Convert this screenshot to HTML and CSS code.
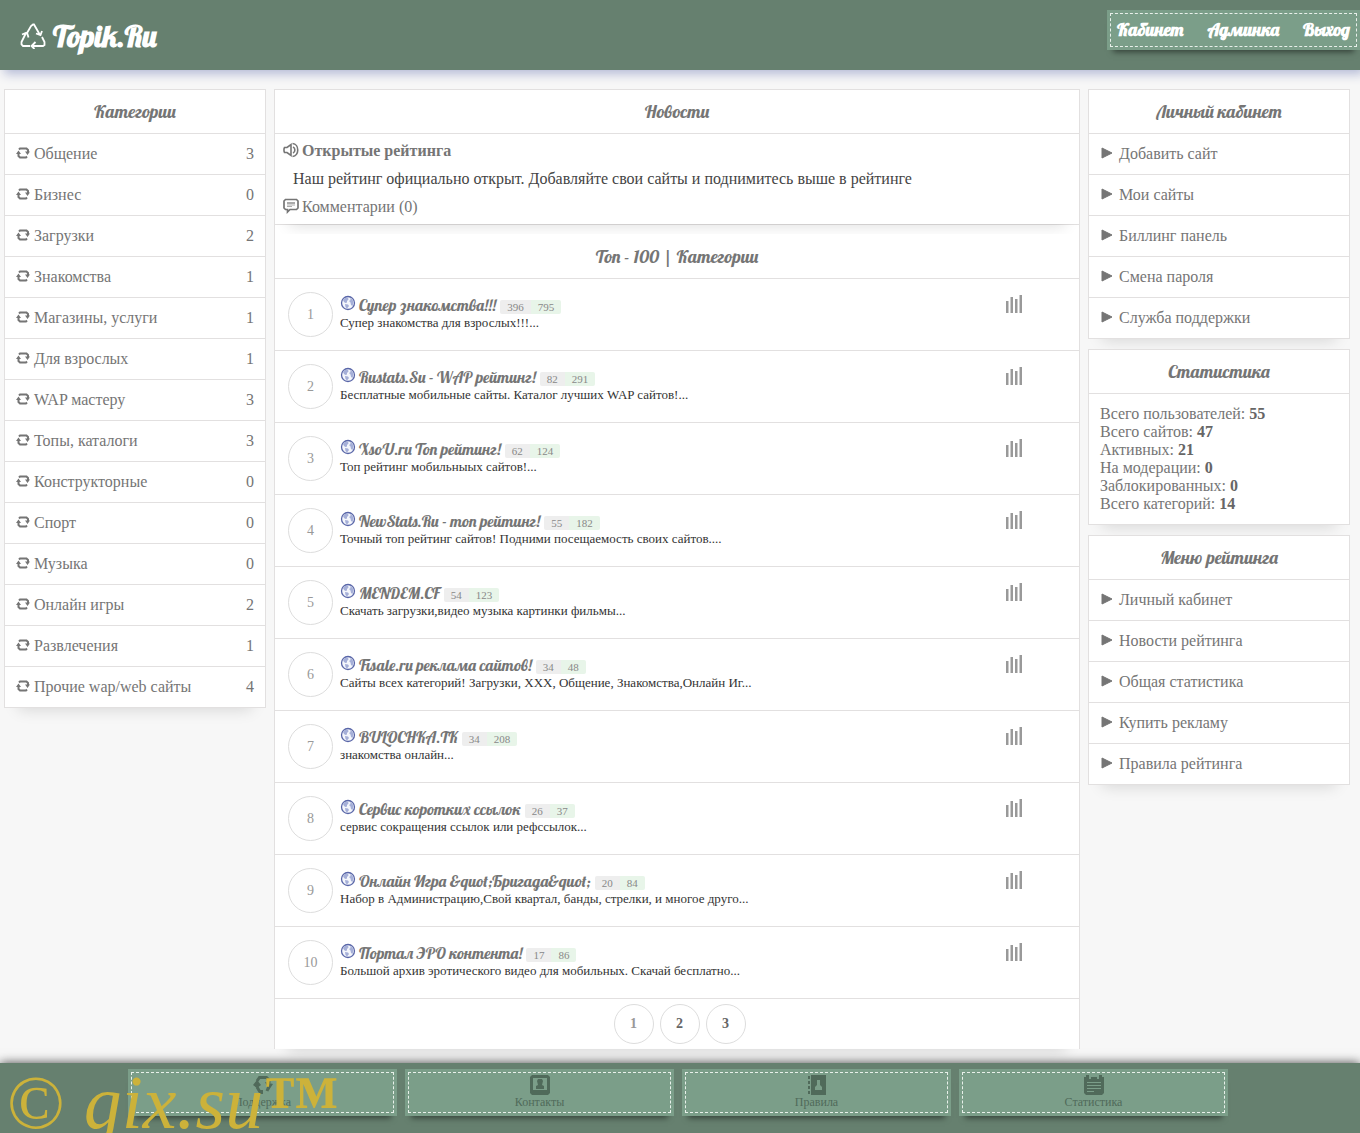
FILE: index.html
```html
<!DOCTYPE html>
<html lang="ru">
<head>
<meta charset="utf-8">
<meta name="viewport" content="width=device-width, initial-scale=1">
<title>Topik.Ru</title>
<link rel="stylesheet" href="styles.css">
</head>
<body>
<svg class="sprite" aria-hidden="true">
  <symbol id="i-cycle" viewBox="0 0 14 12"><path d="M3 2.500 4 1.500h6.500L12 3v2M11 9.500l-1 1H4L2.500 9V7" fill="none" stroke="currentColor" stroke-width="2"/><path d="M9 4.500h5L11.500 8zM0 7l2.500-3.500L5 7z" fill="currentColor"/></symbol>
  <symbol id="i-play" viewBox="0 0 12 12"><path d="M1 1v10l10-5z" fill="currentColor" stroke="currentColor" stroke-linejoin="round"/></symbol>
  <symbol id="i-globe" viewBox="0 0 16 16"><circle cx="8" cy="8" r="6.500" fill="#f4f6fb" stroke="#5966a8" stroke-width="1.300"/><path d="M3 5 5 3l3-.5.500 2L7 6v1.500L5.500 8 4 7zM10 3l2.500 1.500 1 3-1 3.500-1.500-1-.5-2.500L9 6l1.500-1zM5 9l3 .5 1 1.500-2 2.500-1.500-1.500z" fill="#a5afd8"/></symbol>
  <symbol id="i-bars" viewBox="0 0 16 18"><path d="M0 6h2.500v12H0zM4.500 2H7v16H4.500zM9 4h2.500v14H9zM13.500 0H16v18h-2.500z" fill="#999"/></symbol>
  <symbol id="i-sound" viewBox="0 0 16 16"><path d="M1.500 5.500h2.500L8 2.500v11L4 10.500H1.500L1 9V7zM9.500 1.500C16.500 2 16.500 14 9.500 14.500M10 5c2.500 1 2.500 5 0 6" fill="none" stroke="currentColor" stroke-width="1.600"/></symbol>
  <symbol id="i-comment" viewBox="0 0 16 16"><path d="M2.500 1.500h11l1.500 1.500v7l-1.500 1.500H7L4.500 14v-2.500h-2L1 10V3z" fill="none" stroke="currentColor" stroke-width="1.700"/><path d="M4 4h8v2H4zM4 6.500h8v1H4zM4 8h5v1H4z" fill="#aaa"/></symbol>
  <symbol id="f-cycle" viewBox="0 0 20 20"><path d="M4 6 6.500 2.500h7L16 5v3M4 12l3 5M4 8v4M16 11l-2 5" fill="none" stroke="currentColor" stroke-width="3"/><path d="M0 10l4-5 4 5-4 3zM12 7l8 2-4 6zM6 15h4v4H6z" fill="currentColor"/></symbol>
  <symbol id="f-card" viewBox="0 0 20 20"><path d="M2 0h16l2 2v16l-2 2H2l-2-2V2zM3 3v12h14V3z" fill-rule="evenodd" fill="currentColor"/><path d="M8 4h4l1 2-1 4 2 1v3H6v-3l2-1-1-4z" fill="currentColor"/></symbol>
  <symbol id="f-book" viewBox="0 0 20 20"><path d="M4 0h15v20H4zM10 5v5l-2 2v3h7v-3l-2-2V5z" fill-rule="evenodd" fill="currentColor"/><path d="M1 1h2v3H1zM1 6h2v3H1zM1 11h2v3H1zM1 16h2v3H1z" fill="currentColor"/></symbol>
  <symbol id="f-note" viewBox="0 0 20 20"><path d="M0 2h2V0h3v4h2V2h6v2h2V0h3v2h2v16l-2 2H2l-2-2zM3 7v1h14V7zM3 10v1h14v-1zM3 13v1h14v-1zM3 16v1h7v-1z" fill-rule="evenodd" fill="currentColor"/></symbol>
</svg>

<header class="top">
  <a class="logo" href="#">
    <svg width="26" height="26" viewBox="0 0 26 26" fill="none" stroke="currentColor" stroke-width="1.800" aria-hidden="true"><path d="M7 10l4-7 2-1.500h1L20 12M16 10.500l4.500 1.500L22 8M22 14l2.500 5v3L23 23H13M15.500 19l-4 4 3 3M10 23H3l-1.500-1.500V19L6 10M2 11.500l5-2 1.500 5"/></svg>
    Topik.Ru</a>
  <nav class="stitched usernav"><a href="#">Кабинет</a><a href="#">Админка</a><a href="#">Выход</a></nav>
</header>

<div class="columns">
  <aside>
    <section class="card">
      <h2>Категории</h2>
      <ul class="menu">
        <li><a href="#"><svg class="ic"><use href="#i-cycle"/></svg>Общение<span>3</span></a></li>
        <li><a href="#"><svg class="ic"><use href="#i-cycle"/></svg>Бизнес<span>0</span></a></li>
        <li><a href="#"><svg class="ic"><use href="#i-cycle"/></svg>Загрузки<span>2</span></a></li>
        <li><a href="#"><svg class="ic"><use href="#i-cycle"/></svg>Знакомства<span>1</span></a></li>
        <li><a href="#"><svg class="ic"><use href="#i-cycle"/></svg>Магазины, услуги<span>1</span></a></li>
        <li><a href="#"><svg class="ic"><use href="#i-cycle"/></svg>Для взрослых<span>1</span></a></li>
        <li><a href="#"><svg class="ic"><use href="#i-cycle"/></svg>WAP мастеру<span>3</span></a></li>
        <li><a href="#"><svg class="ic"><use href="#i-cycle"/></svg>Топы, каталоги<span>3</span></a></li>
        <li><a href="#"><svg class="ic"><use href="#i-cycle"/></svg>Конструкторные<span>0</span></a></li>
        <li><a href="#"><svg class="ic"><use href="#i-cycle"/></svg>Спорт<span>0</span></a></li>
        <li><a href="#"><svg class="ic"><use href="#i-cycle"/></svg>Музыка<span>0</span></a></li>
        <li><a href="#"><svg class="ic"><use href="#i-cycle"/></svg>Онлайн игры<span>2</span></a></li>
        <li><a href="#"><svg class="ic"><use href="#i-cycle"/></svg>Развлечения<span>1</span></a></li>
        <li><a href="#"><svg class="ic"><use href="#i-cycle"/></svg>Прочие wap/web сайты<span>4</span></a></li>
      </ul>
    </section>
  </aside>

  <main>
    <section class="card news">
      <h2>Новости</h2>
      <div class="newsbody">
        <a href="#"><svg class="ic16"><use href="#i-sound"/></svg><b>Открытые рейтинга</b></a>
        <p>Наш рейтинг официально открыт. Добавляйте свои сайты и поднимитесь выше в рейтинге</p>
        <a href="#"><svg class="ic16"><use href="#i-comment"/></svg>Комментарии (0)</a>
      </div>
    </section>
    <section class="card top100">
      <h2>Топ - 100 | Категории</h2>
      <ol class="sites">
        <li><span class="rank">1</span><div class="site"><div class="line"><svg class="ic16"><use href="#i-globe"/></svg><a href="#">Супер знакомства!!!</a><span class="hits">396</span><span class="hosts">795</span></div><p>Супер знакомства для взрослых!!!...</p></div><a class="stat" href="#" aria-label="Статистика"><svg><use href="#i-bars"/></svg></a></li>
        <li><span class="rank">2</span><div class="site"><div class="line"><svg class="ic16"><use href="#i-globe"/></svg><a href="#">Rustats.Su - WAP рейтинг!</a><span class="hits">82</span><span class="hosts">291</span></div><p>Бесплатные мобильные сайты. Каталог лучших WAP сайтов!...</p></div><a class="stat" href="#" aria-label="Статистика"><svg><use href="#i-bars"/></svg></a></li>
        <li><span class="rank">3</span><div class="site"><div class="line"><svg class="ic16"><use href="#i-globe"/></svg><a href="#">XsoU.ru Топ рейтинг!</a><span class="hits">62</span><span class="hosts">124</span></div><p>Топ рейтинг мобильныых сайтов!...</p></div><a class="stat" href="#" aria-label="Статистика"><svg><use href="#i-bars"/></svg></a></li>
        <li><span class="rank">4</span><div class="site"><div class="line"><svg class="ic16"><use href="#i-globe"/></svg><a href="#">NewStats.Ru - топ рейтинг!</a><span class="hits">55</span><span class="hosts">182</span></div><p>Точный топ рейтинг сайтов! Подними посещаемость своих сайтов....</p></div><a class="stat" href="#" aria-label="Статистика"><svg><use href="#i-bars"/></svg></a></li>
        <li><span class="rank">5</span><div class="site"><div class="line"><svg class="ic16"><use href="#i-globe"/></svg><a href="#">MENDEM.CF</a><span class="hits">54</span><span class="hosts">123</span></div><p>Скачать загрузки,видео музыка картинки фильмы...</p></div><a class="stat" href="#" aria-label="Статистика"><svg><use href="#i-bars"/></svg></a></li>
        <li><span class="rank">6</span><div class="site"><div class="line"><svg class="ic16"><use href="#i-globe"/></svg><a href="#">Fisale.ru реклама сайтов!</a><span class="hits">34</span><span class="hosts">48</span></div><p>Сайты всех категорий! Загрузки, XXX, Общение, Знакомства,Онлайн Иг...</p></div><a class="stat" href="#" aria-label="Статистика"><svg><use href="#i-bars"/></svg></a></li>
        <li><span class="rank">7</span><div class="site"><div class="line"><svg class="ic16"><use href="#i-globe"/></svg><a href="#">BULOCHKA.TK</a><span class="hits">34</span><span class="hosts">208</span></div><p>знакомства онлайн...</p></div><a class="stat" href="#" aria-label="Статистика"><svg><use href="#i-bars"/></svg></a></li>
        <li><span class="rank">8</span><div class="site"><div class="line"><svg class="ic16"><use href="#i-globe"/></svg><a href="#">Сервис коротких ссылок</a><span class="hits">26</span><span class="hosts">37</span></div><p>сервис сокращения ссылок или рефссылок...</p></div><a class="stat" href="#" aria-label="Статистика"><svg><use href="#i-bars"/></svg></a></li>
        <li><span class="rank">9</span><div class="site"><div class="line"><svg class="ic16"><use href="#i-globe"/></svg><a href="#">Онлайн Игра &amp;quot;Бригада&amp;quot;</a><span class="hits">20</span><span class="hosts">84</span></div><p>Набор в Администрацию,Свой квартал, банды, стрелки, и многое друго...</p></div><a class="stat" href="#" aria-label="Статистика"><svg><use href="#i-bars"/></svg></a></li>
        <li><span class="rank">10</span><div class="site"><div class="line"><svg class="ic16"><use href="#i-globe"/></svg><a href="#">Портал ЭРО контента!</a><span class="hits">17</span><span class="hosts">86</span></div><p>Большой архив эротического видео для мобильных. Скачай бесплатно...</p></div><a class="stat" href="#" aria-label="Статистика"><svg><use href="#i-bars"/></svg></a></li>
      </ol>
      <nav class="pages"><a class="current" href="#">1</a><a href="#">2</a><a href="#">3</a></nav>
    </section>
  </main>

  <aside>
    <section class="card">
      <h2>Личный кабинет</h2>
      <ul class="menu arrows">
        <li><a href="#"><svg class="ic"><use href="#i-play"/></svg>Добавить сайт</a></li>
        <li><a href="#"><svg class="ic"><use href="#i-play"/></svg>Мои сайты</a></li>
        <li><a href="#"><svg class="ic"><use href="#i-play"/></svg>Биллинг панель</a></li>
        <li><a href="#"><svg class="ic"><use href="#i-play"/></svg>Смена пароля</a></li>
        <li><a href="#"><svg class="ic"><use href="#i-play"/></svg>Служба поддержки</a></li>
      </ul>
    </section>
    <section class="card">
      <h2>Статистика</h2>
      <ul class="totals">
        <li>Всего пользователей: <b>55</b></li>
        <li>Всего сайтов: <b>47</b></li>
        <li>Активных: <b>21</b></li>
        <li>На модерации: <b>0</b></li>
        <li>Заблокированных: <b>0</b></li>
        <li>Всего категорий: <b>14</b></li>
      </ul>
    </section>
    <section class="card">
      <h2>Меню рейтинга</h2>
      <ul class="menu arrows">
        <li><a href="#"><svg class="ic"><use href="#i-play"/></svg>Личный кабинет</a></li>
        <li><a href="#"><svg class="ic"><use href="#i-play"/></svg>Новости рейтинга</a></li>
        <li><a href="#"><svg class="ic"><use href="#i-play"/></svg>Общая статистика</a></li>
        <li><a href="#"><svg class="ic"><use href="#i-play"/></svg>Купить рекламу</a></li>
        <li><a href="#"><svg class="ic"><use href="#i-play"/></svg>Правила рейтинга</a></li>
      </ul>
    </section>
  </aside>
</div>

<footer class="bottom">
  <a class="stitched" href="#"><svg><use href="#f-cycle"/></svg>Поддержка</a>
  <a class="stitched" href="#"><svg><use href="#f-card"/></svg>Контакты</a>
  <a class="stitched" href="#"><svg><use href="#f-book"/></svg>Правила</a>
  <a class="stitched" href="#"><svg><use href="#f-note"/></svg>Статистика</a>
  <div class="mark">© <i>gix.su</i><b>™</b></div>
</footer>
</body>
</html>
```
FILE: styles.css
```css
* { box-sizing: border-box; }
body {
  margin: 0;
  background: #f7f7f7;
  color: #757575;
  font: 16px/18px "Liberation Serif", "Times New Roman", serif;
}
a { color: inherit; text-decoration: none; }
ul, ol { list-style: none; margin: 0; padding: 0; }
p { margin: 0; }
svg { flex: none; }
.sprite { position: absolute; width: 0; height: 0; }

.top {
  display: flex;
  justify-content: space-between;
  align-items: flex-start;
  min-height: 70px;
  padding-top: 10px;
  background: #66806f;
  box-shadow: 4px 4px 10px #b4bad6;
}
.logo {
  display: flex;
  align-items: center;
  gap: 7px;
  height: 52px;
  padding-left: 20px;
  color: #fff;
  font: bold 30px/40px Lobster, "Liberation Serif", serif;
}
.stitched {
  background: #7b9e89;
  outline: 1px dashed #e8f0ea;
  outline-offset: -4px;
  box-shadow: 0 8px 6px -6px rgba(0, 0, 0, .5);
}
.usernav {
  display: flex;
  gap: 24px;
  padding: 0 10px;
  color: #fff;
  font: bold 18px/40px Lobster, "Liberation Serif", serif;
}

.columns {
  display: grid;
  grid-template-columns: 262px minmax(0, 1fr) 262px;
  gap: 8px;
  align-items: start;
  padding: 19px 10px 14px 4px;
}
aside { display: grid; gap: 10px; }
.card {
  background: #fff;
  border: 1px solid #e2e0e0;
  box-shadow: 0 16px 14px -14px rgba(0, 0, 0, .13);
}
.card h2 {
  margin: 0;
  border-bottom: 1px solid #e2e0e0;
  text-align: center;
  font: 18px/43px Lobster, "Liberation Serif", serif;
}
.menu li + li { border-top: 1px solid #e2e0e0; }
.menu a {
  display: flex;
  align-items: center;
  gap: 4px;
  height: 40px;
  padding: 0 11px;
}
.menu .ic { width: 14px; height: 12px; margin-bottom: 2px; }
.menu span { margin-left: auto; }
.arrows a { gap: 5px; }
.totals { padding: 11px; }
.totals b { color: #666; }

.news { position: relative; }
.newsbody { padding: 3px 8px; line-height: 28px; }
.newsbody a { display: flex; gap: 3px; align-items: center; }
.newsbody .ic16 { margin-bottom: 2px; }
.newsbody p { padding-left: 10px; color: #444; }
.ic16 { width: 16px; height: 16px; }
.top100 { border-top: 0; border-bottom: 0; }
.top100 h2 { padding-top: 10px; }
.news { box-shadow: none; }
.news::after {
  content: "";
  position: absolute;
  inset: 0;
  box-shadow: 0 16px 14px -14px rgba(0, 0, 0, .13);
  clip-path: inset(0 0 -10px 0);
  pointer-events: none;
}

.sites li {
  display: flex;
  align-items: flex-start;
  height: 72px;
  padding-top: 13px;
  padding-left: 13px;
  border-bottom: 1px solid #e2e0e0;
}
.rank {
  flex: none;
  width: 45px;
  border: 1px solid #ddd;
  border-radius: 50%;
  text-align: center;
  color: #999;
  font-size: 14px;
  line-height: 43px;
}
.site { flex: 1; min-width: 0; padding: 2px 0 0 7px; }
.line { display: flex; align-items: center; height: 22px; font-size: 11px; line-height: 14px; }
.line .ic16 { margin: 0 3px 4px 0; }
.line a { margin-right: 4px; font: 16px/22px Lobster, "Liberation Serif", serif; }
.hits, .hosts { margin-top: 3px; padding: 0 7px; color: #888; }
.hits { background: #eee; border-radius: 2px 0 0 2px; }
.hosts { background: #e8f5e9; border-radius: 0 2px 2px 0; }
.site p { color: #333; font-size: 13px; line-height: 14px; }
.stat { display: flex; justify-content: center; flex: none; width: 130px; padding-top: 3px; }
.stat svg { width: 16px; height: 18px; }

.pages {
  display: flex;
  justify-content: center;
  gap: 6px;
  padding: 5px 0 5px 5px;
}
.pages a {
  width: 40px;
  border: 1px solid #ddd;
  border-radius: 50%;
  text-align: center;
  font-size: 14px;
  font-weight: bold;
  line-height: 38px;
  color: #666;
}
.pages .current { color: #999; }

.bottom {
  position: relative;
  overflow: hidden;
  display: flex;
  align-items: flex-start;
  gap: 8px;
  height: 70px;
  padding: 6px 132px 0 128px;
  background: #66806f;
  box-shadow: 0 0 10px #444;
}
.bottom .stitched {
  flex: 1;
  display: flex;
  flex-direction: column;
  align-items: center;
  height: 47px;
  padding-top: 6px;
  color: #506a5a;
  font-size: 12px;
  line-height: 14px;
}
.bottom svg { width: 20px; height: 20px; }
.mark {
  position: absolute;
  left: 7px;
  top: 9px;
  color: #ccb23a;
  font-size: 76px;
  line-height: 60px;
  white-space: nowrap;
  pointer-events: none;
}
```
